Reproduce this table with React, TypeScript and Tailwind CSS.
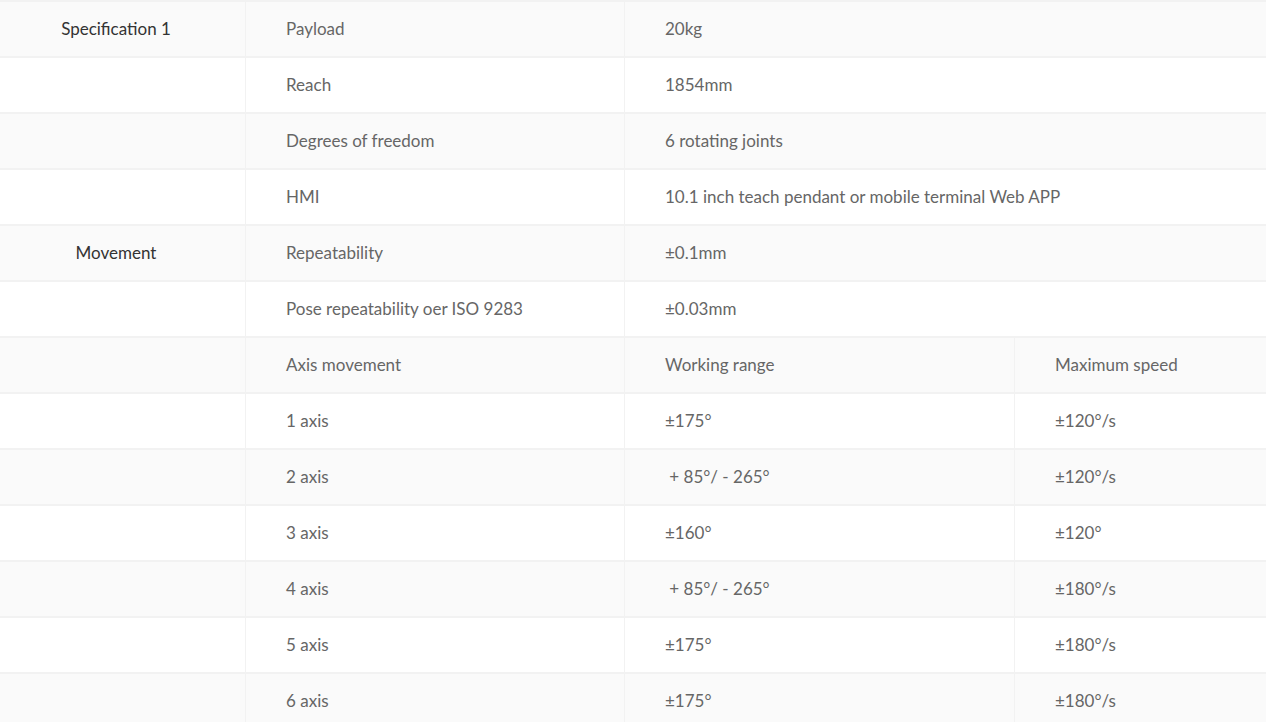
import React from 'react';

type Row = { label?: string; name: string; value: string; extra?: string };

const rows: Row[] = [
  { label: 'Specification 1', name: 'Payload', value: '20kg' },
  { name: 'Reach', value: '1854mm' },
  { name: 'Degrees of freedom', value: '6 rotating joints' },
  { name: 'HMI', value: '10.1 inch teach pendant or mobile terminal Web APP' },
  { label: 'Movement', name: 'Repeatability', value: '±0.1mm' },
  { name: 'Pose repeatability oer ISO 9283', value: '±0.03mm' },
  { name: 'Axis movement', value: 'Working range', extra: 'Maximum speed' },
  { name: '1 axis', value: '±175°', extra: '±120°/s' },
  { name: '2 axis', value: '\u00a0+ 85°/ - 265°', extra: '±120°/s' },
  { name: '3 axis', value: '±160°', extra: '±120°' },
  { name: '4 axis', value: '\u00a0+ 85°/ - 265°', extra: '±180°/s' },
  { name: '5 axis', value: '±175°', extra: '±180°/s' },
  { name: '6 axis', value: '±175°', extra: '±180°/s' },
];

export default function App() {
  return (
    <div className="w-[1266px] h-[722px] overflow-hidden bg-white font-['Lato',sans-serif] text-[17px]">
      <div className="border-t-2 border-[#f2f2f2]">
        {rows.map((r, i) => (
          <div
            key={i}
            className={`flex h-[56px] border-b-2 border-[#f2f2f2] ${i % 2 === 0 ? 'bg-[#fafafa]' : 'bg-white'}`}
          >
            <div className="w-[246px] shrink-0 border-r border-[#f2f2f2] flex items-center justify-center pr-[13px] text-[#333]">
              {r.label}
            </div>
            <div className="w-[379px] shrink-0 border-r border-[#f2f2f2] flex items-center pl-[40px] text-[#666]">
              {r.name}
            </div>
            {r.extra ? (
              <>
                <div className="w-[390px] shrink-0 border-r border-[#f2f2f2] flex items-center pl-[40px] text-[#666]">
                  {r.value}
                </div>
                <div className="flex-1 flex items-center pl-[40px] text-[#666]">{r.extra}</div>
              </>
            ) : (
              <div className="flex-1 flex items-center pl-[40px] text-[#666]">{r.value}</div>
            )}
          </div>
        ))}
      </div>
    </div>
  );
}
